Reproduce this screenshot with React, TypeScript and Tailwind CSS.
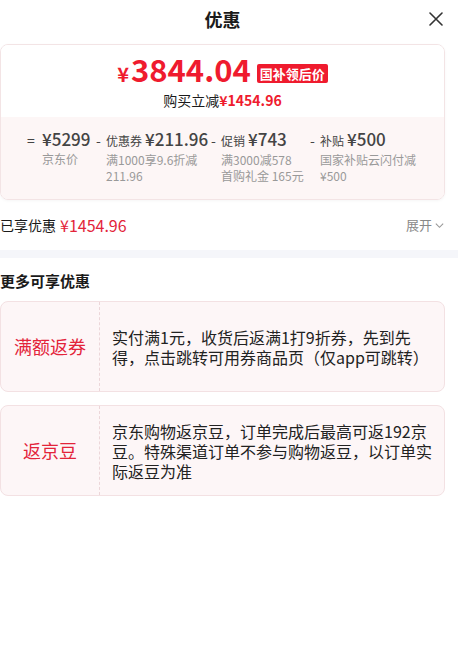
import React from 'react';

const font = { fontFamily: '"Noto Sans CJK SC", "Noto Sans", sans-serif' };

interface Part {
  sign: string;
  label?: string;
  value: string;
  notes: string[];
  width: string;
  indent: string;
}

const parts: Part[] = [
  { sign: '=', value: '¥5299', notes: ['京东价'], width: 'w-[69px]', indent: 'w-[15px]' },
  { sign: '-', label: '优惠券', value: '¥211.96', notes: ['满1000享9.6折减', '211.96'], width: 'w-[115px]', indent: 'w-[10px]' },
  { sign: '-', label: '促销', value: '¥743', notes: ['满3000减578', '首购礼金 165元'], width: 'w-[99px]', indent: 'w-[10px]' },
  { sign: '-', label: '补贴', value: '¥500', notes: ['国家补贴云闪付减', '¥500'], width: 'flex-1', indent: 'w-[10px]' },
];

const offers = [
  { tag: '满额返券', text: '实付满1元，收货后返满1打9折券，先到先得，点击跳转可用券商品页（仅app可跳转）' },
  { tag: '返京豆', text: '京东购物返京豆，订单完成后最高可返192京豆。特殊渠道订单不参与购物返豆，以订单实际返豆为准' },
];

const App: React.FC = () => {
  return (
    <div className="w-[458px] h-[670px] bg-white overflow-hidden text-[#1a1a1a]" style={font}>
      <div className="pr-[13px]">
        {/* header */}
        <div className="relative h-[44px] flex items-center justify-center pb-[6px]">
          <h1 className="text-[18px] font-bold text-[#1a1a1a]">优惠</h1>
          <svg className="absolute right-[2px] top-[12px] w-[14px] h-[14px]" viewBox="0 0 14 14" fill="none" stroke="#333" strokeWidth="1.6" strokeLinecap="round">
            <path d="M1 1 L13 13 M13 1 L1 13" />
          </svg>
        </div>

        {/* price card */}
        <div className="rounded-[8px] border border-[#f3e4e5] overflow-hidden shadow-[0_1px_3px_rgba(0,0,0,0.04)]">
          <div className="h-[72px] bg-white flex flex-col items-center pt-[10px]">
            <div className="flex items-center gap-[6px] h-[34px]">
              <span className="text-[#ef1b2e] font-bold leading-[34px]">
                <span className="text-[20px] mr-[2px]">¥</span>
                <span className="text-[31px]">3844.04</span>
              </span>
              <span className="bg-[#ef1b2e] text-white text-[13px] font-bold leading-[15px] px-[3px] py-[2px] rounded-[2px] mt-[3px]">国补领后价</span>
            </div>
            <div className="text-[14px] leading-[20px] mt-[1px]">
              <span className="text-[#1a1a1a]">购买立减</span>
              <span className="text-[#ef1b2e] font-semibold">¥1454.96</span>
            </div>
          </div>
          <div className="h-[82px] bg-[#fdf6f6] flex pl-[26px] pt-[11px]">
            {parts.map((p) => (
              <div key={p.value} className={`${p.width} flex flex-col`}>
                <div className="flex items-baseline text-[#444] leading-[22px] whitespace-nowrap">
                  <span className={`${p.indent} text-[14px]`}>{p.sign}</span>
                  {p.label && <span className="text-[12px] mr-[3px]">{p.label}</span>}
                  <span className="text-[17px] font-medium">{p.value}</span>
                </div>
                <div className="flex">
                  <span className={`${p.indent} shrink-0`} />
                  <div className="text-[12px] leading-[16px] text-[#999]">
                    {p.notes.map((n) => (
                      <div key={n} className="whitespace-nowrap">{n}</div>
                    ))}
                  </div>
                </div>
              </div>
            ))}
          </div>
        </div>

        {/* saved row */}
        <div className="h-[50px] flex items-center justify-between">
          <div className="flex items-center gap-[4px]">
            <span className="text-[14px] text-[#1a1a1a]">已享优惠</span>
            <span className="text-[16px] text-[#e3243a]">¥1454.96</span>
          </div>
          <div className="flex items-center gap-[2px] text-[13px] text-[#888]">
            <span>展开</span>
            <svg className="w-[11px] h-[11px]" viewBox="0 0 12 12" fill="none" stroke="#999" strokeWidth="1.2">
              <path d="M2 4 L6 8 L10 4" />
            </svg>
          </div>
        </div>
      </div>

      <div className="h-[8px] bg-[#f5f6fa]" />

      <div className="pr-[13px]">
        <h2 className="text-[15px] font-bold leading-[22px] pt-[12px] pb-[9px]">更多可享优惠</h2>

        <div className="flex flex-col gap-[13px]">
          {offers.map((o) => (
            <div key={o.tag} className="h-[91px] flex rounded-[8px] border border-[#f3e1e3] bg-[#fdf6f7]">
              <div className="w-[99px] shrink-0 flex items-center justify-center text-[18px] text-[#e3243a] border-r border-dashed border-[#ecd6d9]">
                {o.tag}
              </div>
              <div className="flex-1 flex items-center pl-[12px] pr-[10px] text-[16px] leading-[20px] text-[#222]">
                {o.text}
              </div>
            </div>
          ))}
        </div>
      </div>
    </div>
  );
};

export default App;
